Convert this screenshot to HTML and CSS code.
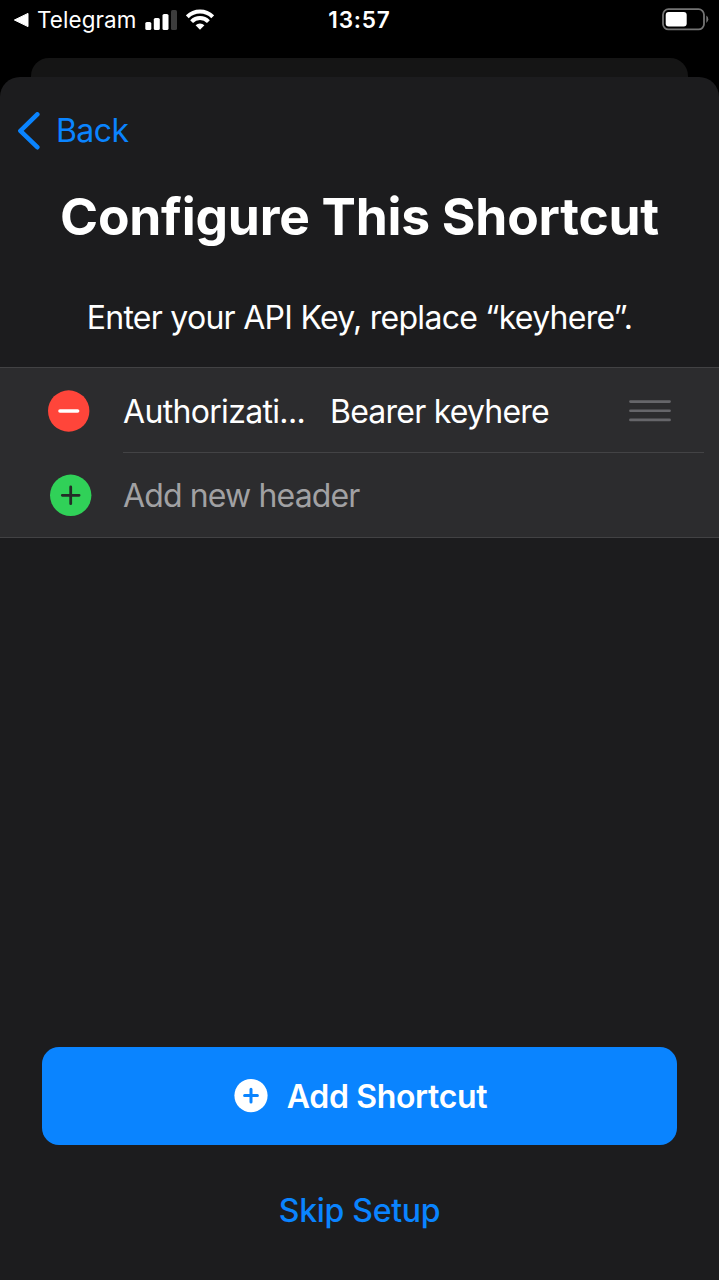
FILE: index.html
```html
<!DOCTYPE html>
<html lang="en">
<head>
<meta charset="utf-8">
<title>Configure This Shortcut</title>
<link rel="stylesheet" href="styles.css">
</head>
<body>
<header class="status">
  <div class="status-left">
    <svg class="return-arrow" width="16" height="16" viewBox="0 0 16 16"><path d="M1.4 8 L15 1.4 V14.6 Z" fill="#fff" stroke="#fff" stroke-width="1" stroke-linejoin="round"/></svg>
    <span class="app-name">Telegram</span>
    <svg class="signal" width="32" height="20" viewBox="0 0 32 20"><g fill="#fff"><rect x="0.3" y="12" width="6" height="8" rx="1.6"/><rect x="8.8" y="8" width="6" height="12" rx="1.6"/><rect x="17.5" y="4" width="6" height="16" rx="1.6"/></g><rect x="26" y="0" width="6" height="20" rx="1.6" fill="#3c3c3c"/></svg>
    <svg class="wifi" width="28" height="21" viewBox="0 0 28 21"><g fill="none" stroke="#fff" stroke-width="4"><path d="M1.3 7.8 A18 18 0 0 1 26.7 7.8"/><path d="M5.6 12.6 A11.8 11.8 0 0 1 22.4 12.6"/></g><path d="M14 20.8 L9.6 16.3 A6.4 6.4 0 0 1 18.4 16.3 Z" fill="#fff"/></svg>
  </div>
  <span class="time">13:57</span>
  <div class="status-right">
    <svg width="47" height="23" viewBox="0 0 47 23"><rect x="1" y="1.2" width="41" height="20.2" rx="5.5" fill="none" stroke="#747474" stroke-width="1.8"/><rect x="3.7" y="4" width="21" height="14.6" rx="3" fill="#fff"/><path d="M44.3 7.6 Q46.3 8.8 46.3 11.3 Q46.3 13.8 44.3 15 Z" fill="#747474"/></svg>
  </div>
</header>
<div class="sheet-behind"></div>
<main class="sheet">
  <a class="back">
    <svg width="24" height="38" viewBox="0 0 24 38"><path d="M20.3 2.4 L3.4 18.8 L20.3 35.2" fill="none" stroke="#0a84ff" stroke-width="4.6" stroke-linecap="round" stroke-linejoin="round"/></svg>
    <span>Back</span>
  </a>
  <h1 class="title">Configure This Shortcut</h1>
  <p class="prompt">Enter your API Key, replace “keyhere”.</p>
  <section class="headers">
    <div class="row row-entry">
      <svg class="row-icon" width="42" height="42" viewBox="0 0 42 42"><circle cx="20.7" cy="21" r="20.7" fill="#ff453a"/><path d="M12 21 H29.6" stroke="#fff" stroke-width="3.6" stroke-linecap="round"/></svg>
      <div class="row-body">
        <span class="key">Authorizati...</span>
        <span class="value">Bearer keyhere</span>
        <svg class="grip" width="42" height="22" viewBox="0 0 42 22"><path d="M1.4 1.6 H40.6 M1.4 10.7 H40.6 M1.4 19.9 H40.6" stroke="#66666a" stroke-width="2.6" stroke-linecap="round"/></svg>
      </div>
    </div>
    <div class="row row-add">
      <svg class="row-icon" width="42" height="42" viewBox="0 0 42 42"><circle cx="20.7" cy="21.3" r="20.7" fill="#30d158"/><path d="M12.3 21.3 H29.1 M20.7 12.9 V29.7" stroke="#242c27" stroke-width="2.8" stroke-linecap="round"/></svg>
      <div class="row-body"><span class="placeholder">Add new header</span></div>
    </div>
  </section>
  <footer class="actions">
    <button class="add">
      <svg width="34" height="34" viewBox="0 0 34 34"><circle cx="17" cy="16.6" r="16.6" fill="#fff"/><path d="M10.6 16.6 H23.4 M17 10.2 V23" stroke="#0a84ff" stroke-width="3" stroke-linecap="round"/></svg>
      <span>Add Shortcut</span>
    </button>
    <a class="skip">Skip Setup</a>
  </footer>
</main>
</body>
</html>
```
FILE: styles.css
```css
* { box-sizing: border-box; }
body {
  margin: 0;
  height: 1280px;
  overflow: hidden;
  display: flex;
  flex-direction: column;
  background: #000;
  color: #fff;
  font-family: Inter, "Liberation Sans", sans-serif;
  font-size: 32px;
  white-space: nowrap;
}
svg { display: block; flex: none; }
.status {
  height: 39px;
  margin-bottom: 19px;
  display: grid;
  grid-template-columns: 1fr auto 1fr;
  align-items: center;
  font-size: 22.4px;
}
.status-left { display: flex; align-items: center; padding-left: 13px; }
.app-name { width: 107px; padding-left: 8px; letter-spacing: 0.1px; }
.signal { margin-left: 9px; }
.wifi { margin-left: 9px; }
.time { font-weight: 600; font-size: 22.6px; letter-spacing: 0.8px; }
.status-right { display: flex; justify-content: flex-end; padding-right: 10px; }
.sheet-behind {
  height: 19px;
  margin: 0 31px;
  flex: none;
  border-radius: 18px 18px 0 0;
  background: #151515;
}
.sheet {
  flex: 1;
  display: flex;
  flex-direction: column;
  border-radius: 20px 20px 0 0;
  background: #1c1c1e;
}
.back {
  display: flex;
  align-items: center;
  gap: 15px;
  height: 38px;
  margin: 35px 0 0 17px;
  color: #0a84ff;
  letter-spacing: -0.6px;
}
.back span { padding-bottom: 2px; }
.title {
  margin: 34px 0 0;
  line-height: 64px;
  font-size: 51.5px;
  font-weight: 700;
  letter-spacing: -0.23px;
  text-align: center;
}
.prompt {
  margin: 50px 0 0;
  line-height: 40px;
  letter-spacing: -0.73px;
  text-align: center;
}
.headers {
  margin-top: 29px;
  border-top: 1px solid #424244;
  border-bottom: 1px solid #424244;
  background: #2c2c2e;
}
.row { display: flex; height: 85px; }
.row-add { height: 84px; }
.row-icon { align-self: center; margin-left: 48px; margin-right: 33px; }
.row-add .row-icon { margin-left: 50px; margin-right: 31px; }
.row-body {
  flex: 1;
  display: flex;
  align-items: center;
  margin-right: 15px;
}
.row-entry .row-body { border-bottom: 1px solid #434345; padding-top: 2px; }
.key { width: 207px; letter-spacing: -0.67px; }
.value { flex: 1; letter-spacing: -0.78px; }
.grip { margin-right: 33px; }
.placeholder { color: #a1a1a3; letter-spacing: -0.87px; }
.actions {
  margin: auto 42px 0;
  display: flex;
  flex-direction: column;
  align-items: center;
  padding-bottom: 49px;
}
.add {
  width: 100%;
  height: 98px;
  display: flex;
  align-items: center;
  justify-content: center;
  gap: 19px;
  padding: 0 6px 0 8px;
  border: 0;
  border-radius: 17px;
  background: #0a84ff;
  color: #fff;
  font: inherit;
  font-weight: 600;
  letter-spacing: -0.35px;
}
.skip {
  margin-top: 46px;
  line-height: 40px;
  color: #0a84ff;
  font-weight: 500;
  letter-spacing: -0.3px;
}
```
